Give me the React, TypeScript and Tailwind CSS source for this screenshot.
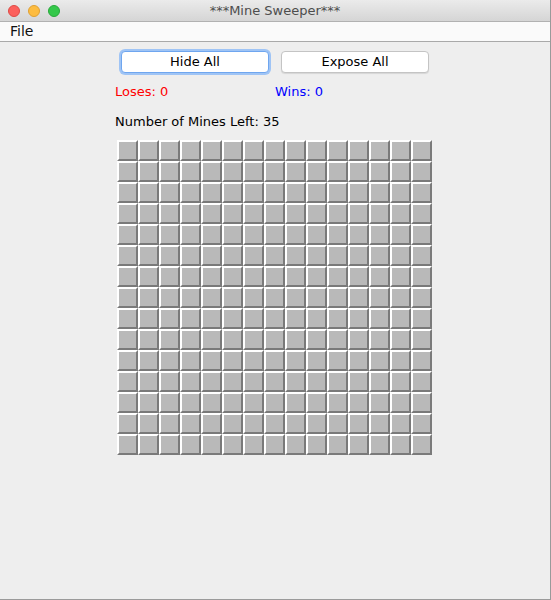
import React from 'react'

const SIZE = 15

const Cell: React.FC = () => (
  <div className="w-[21px] h-[21px] box-border border-2 border-t-white border-l-white border-b-[#7a7a7a] border-r-[#7a7a7a] bg-[#b9b9b9]" />
)

export default function App() {
  const cells = Array.from({ length: SIZE * SIZE }, (_, i) => i)

  return (
    <div className="w-[551px] h-[600px] flex flex-col bg-[#eeeeee] text-[13px] text-black font-['DejaVu_Sans',sans-serif] overflow-hidden border-r border-b border-[#9a9a9a]">
      {/* title bar */}
      <div className="h-[22px] shrink-0 relative flex items-center justify-center bg-gradient-to-b from-[#ebebeb] to-[#d5d5d5] border-b border-[#b1b1b1]">
        <div className="absolute left-[8px] top-[5px] flex gap-[8px]">
          <span className="w-[12px] h-[12px] rounded-full bg-[#fc605c] border border-[#de4a45]" />
          <span className="w-[12px] h-[12px] rounded-full bg-[#fdbc40] border border-[#dfa032]" />
          <span className="w-[12px] h-[12px] rounded-full bg-[#34c84a] border border-[#28a83a]" />
        </div>
        <span className="text-[13px] text-[#4d4d4d]">***Mine Sweeper***</span>
      </div>

      {/* menu bar */}
      <div className="h-[20px] shrink-0 flex items-center px-[10px] bg-[#fafafa] border-b border-[#a9a9a9]">
        <span className="text-[14px] text-[#111]">File</span>
      </div>

      {/* controls */}
      <div className="flex flex-col items-center">
        <div className="mt-[9px] flex gap-[12px]">
          <button className="w-[148px] h-[22px] rounded-[4px] bg-white border border-[#6fa6ef] ring-2 ring-[#9fc4f5] text-[13px]">
            Hide All
          </button>
          <button className="w-[148px] h-[22px] rounded-[4px] bg-white border border-[#c4c4c4] shadow-[0_1px_1px_rgba(0,0,0,0.1)] text-[13px]">
            Expose All
          </button>
        </div>

        <div className="w-[320px] mt-[9px] flex">
          <span className="w-[160px] text-[#ff0000]">Loses: 0</span>
          <span className="text-[#0000ff]">Wins: 0</span>
        </div>

        <div className="w-[320px] mt-[10px]">Number of Mines Left: 35</div>

        <div className="mt-[9px] grid grid-cols-[repeat(15,21px)] ml-[-2px]">
          {cells.map((i) => (
            <Cell key={i} />
          ))}
        </div>
      </div>
    </div>
  )
}
